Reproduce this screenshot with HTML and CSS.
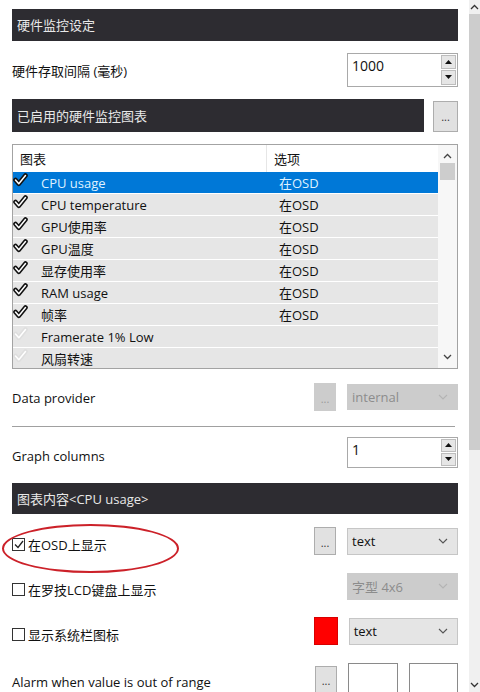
FILE: index.html
```html
<!DOCTYPE html>
<html lang="zh-CN">
<head>
  <meta charset="UTF-8" />
  <meta name="viewport" content="width=device-width, initial-scale=1.0" />
  <title>硬件监控设定</title>
  <link rel="stylesheet" href="styles.css">
</head>
<body>
  <div class="window">
    <div class="panel">
      <div class="title">硬件监控设定</div>

      <div class="row r-interval">
        <span class="label">硬件存取间隔 (毫秒)</span>
        <div class="spin tall">
          <span class="spin-val">1000</span>
          <div class="spin-btns">
            <span class="spin-btn"><svg width="7" height="4" viewBox="0 0 7 4"><path d="M0 4 L3.5 0 L7 4 Z" fill="#111"/></svg></span>
            <span class="spin-btn"><svg width="7" height="4" viewBox="0 0 7 4"><path d="M0 0 L3.5 4 L7 0 Z" fill="#111"/></svg></span>
          </div>
        </div>
      </div>

      <div class="title-row">
        <div class="title grow">已启用的硬件监控图表</div>
        <button class="dots big">...</button>
      </div>

      <div class="list">
        <div class="list-body">
          <div class="list-head">
            <span class="col-name">图表</span>
            <span class="col-opt">选项</span>
          </div>
          <div id="rows"></div>
        </div>
        <div class="list-scroll">
          <svg width="9" height="6" viewBox="0 0 9 6"><path d="M1 5 L4.5 1.5 L8 5" fill="none" stroke="#444" stroke-width="1.3"/></svg>
          <div class="list-thumb"></div>
          <div class="grow"></div>
          <svg width="9" height="6" viewBox="0 0 9 6"><path d="M1 1 L4.5 4.5 L8 1" fill="none" stroke="#444" stroke-width="1.3"/></svg>
        </div>
      </div>

      <div class="row r-provider">
        <span class="label">Data provider</span>
        <div class="ctrls">
          <button class="dots off">...</button>
          <div class="select off">
            <span>internal</span>
            <svg width="10" height="6" viewBox="0 0 10 6"><path d="M1 1 L5 5 L9 1" fill="none" stroke="#b4b4b4" stroke-width="1.1"/></svg>
          </div>
        </div>
      </div>

      <div class="sep"></div>

      <div class="row r-columns">
        <span class="label">Graph columns</span>
        <div class="spin">
          <span class="spin-val">1</span>
          <div class="spin-btns">
            <span class="spin-btn"><svg width="7" height="4" viewBox="0 0 7 4"><path d="M0 4 L3.5 0 L7 4 Z" fill="#111"/></svg></span>
            <span class="spin-btn"><svg width="7" height="4" viewBox="0 0 7 4"><path d="M0 0 L3.5 4 L7 0 Z" fill="#111"/></svg></span>
          </div>
        </div>
      </div>

      <div class="title t-content">图表内容&lt;CPU usage&gt;</div>

      <div class="row opt first">
        <label class="check"><span class="box on"><svg width="10" height="9" viewBox="0 0 10 9"><path d="M1 4.5 L4 7.5 L9 1" fill="none" stroke="#222" stroke-width="1.3"/></svg></span>在OSD上显示</label>
        <div class="ctrls">
          <button class="dots">...</button>
          <div class="select">
            <span>text</span>
            <svg width="10" height="6" viewBox="0 0 10 6"><path d="M1 1 L5 5 L9 1" fill="none" stroke="#555" stroke-width="1.1"/></svg>
          </div>
        </div>
      </div>

      <div class="row opt">
        <label class="check"><span class="box"></span>在罗技LCD键盘上显示</label>
        <div class="ctrls">
          <div class="select off">
            <span>字型 4x6</span>
            <svg width="10" height="6" viewBox="0 0 10 6"><path d="M1 1 L5 5 L9 1" fill="none" stroke="#b4b4b4" stroke-width="1.1"/></svg>
          </div>
        </div>
      </div>

      <div class="row opt">
        <label class="check"><span class="box"></span>显示系统栏图标</label>
        <div class="ctrls">
          <div class="swatch"></div>
          <div class="select">
            <span>text</span>
            <svg width="10" height="6" viewBox="0 0 10 6"><path d="M1 1 L5 5 L9 1" fill="none" stroke="#555" stroke-width="1.1"/></svg>
          </div>
        </div>
      </div>

      <div class="row opt last">
        <span class="label">Alarm when value is out of range</span>
        <div class="ctrls">
          <button class="dots low">...</button>
          <div class="field"></div>
          <div class="field"></div>
        </div>
      </div>

      <div class="mark"></div>
    </div>

    <div class="vscroll">
      <svg width="9" height="6" viewBox="0 0 9 6"><path d="M1 5 L4.5 1.5 L8 5" fill="none" stroke="#333" stroke-width="1.3"/></svg>
      <div class="thumb"></div>
      <div class="grow"></div>
      <svg width="9" height="6" viewBox="0 0 9 6"><path d="M1 1 L4.5 4.5 L8 1" fill="none" stroke="#333" stroke-width="1.3"/></svg>
    </div>
  </div>

  <script>
    const graphs = [
      { name: 'CPU usage', osd: true, on: true, sel: true },
      { name: 'CPU temperature', osd: true, on: true },
      { name: 'GPU使用率', osd: true, on: true },
      { name: 'GPU温度', osd: true, on: true },
      { name: '显存使用率', osd: true, on: true },
      { name: 'RAM usage', osd: true, on: true },
      { name: '帧率', osd: true, on: true },
      { name: 'Framerate 1% Low', osd: false, on: false },
      { name: '风扇转速', osd: false, on: false }
    ];

    const tick = (fill, edge) => `
      <svg width="15" height="14" viewBox="0 0 15 14">
        <path d="M2.5 7 L5.8 10.8 L12.5 2.5" fill="none" stroke="${edge}" stroke-width="4.6" stroke-linecap="round" stroke-linejoin="round"/>
        <path d="M2.5 7 L5.8 10.8 L12.5 2.5" fill="none" stroke="${fill}" stroke-width="1.5" stroke-linecap="round" stroke-linejoin="round"/>
      </svg>`;

    const rows = document.getElementById('rows');
    graphs.forEach(g => {
      const mark = g.on ? tick('#fff', '#111') : tick('#fff', '#dedede');
      rows.innerHTML += `
        <div class="item${g.sel ? ' sel' : ''}">
          <span class="col-check">${mark}</span>
          <span class="col-text">${g.name}</span>
          <span class="col-val">${g.osd ? '在OSD' : ''}</span>
        </div>`;
    });
  </script>
</body>
</html>
```

FILE: styles.css
```css
* { box-sizing: border-box; }
body {
  margin: 0;
  font-family: "Open Sans", "Noto Sans CJK SC", sans-serif;
  font-size: 13px;
  color: #111;
  background: #fff;
}

.window {
  display: flex;
  height: 692px;
  overflow: hidden;
}

.panel {
  flex: 1;
  position: relative;
  display: flex;
  flex-direction: column;
  padding: 9px 11px 0 12px;
}

.grow { flex: 1; }

.title {
  height: 32px;
  background: #2d2c31;
  color: #e8e8e8;
  padding-left: 5px;
  display: flex;
  align-items: center;
}

.row {
  display: flex;
  align-items: center;
  justify-content: space-between;
}

.label { padding-top: 2px; }

.r-interval { margin-top: 12px; height: 34px; }

.title-row {
  margin-top: 12px;
  display: flex;
  align-items: flex-start;
  gap: 9px;
}

.title-row .title { height: 33px; }

/* buttons */
.dots {
  width: 22px;
  height: 28px;
  padding: 0 0 6px;
  font: inherit;
  font-size: 11px;
  line-height: 1;
  color: #333;
  background: #e1e1e1;
  border: 1px solid #adadad;
  display: flex;
  align-items: flex-end;
  justify-content: center;
}

.dots.big { width: 25px; height: 31px; margin-top: 2px; padding-bottom: 9px; }
.dots.off { background: #cccccc; border-color: #cccccc; color: #9a9a9a; }
.dots.low { height: 27px; margin-top: 4px; align-self: flex-start; }

/* spin box */
.spin {
  width: 111px;
  height: 31px;
  border: 1px solid #a9a9a9;
  display: flex;
  justify-content: space-between;
  background: #fff;
}

.spin.tall { height: 34px; }

.spin-val { padding: 2px 0 0 4px; font-size: 14px; }

.spin-btns {
  width: 16px;
  display: flex;
  flex-direction: column;
  gap: 1px;
  padding: 1px 1px 1px 0;
}

.spin-btn {
  flex: 1;
  background: #e6e6e6;
  border: 1px solid #bdbdbd;
  display: flex;
  align-items: center;
  justify-content: center;
}

/* list */
.list {
  margin-top: 12px;
  height: 227px;
  border: 1px solid #a3a3a3;
  display: flex;
  overflow: hidden;
}

.list-body { flex: 1; }

.list-head {
  height: 27px;
  display: flex;
  align-items: stretch;
}

.col-name {
  width: 254px;
  padding: 4px 0 0 7px;
  border-right: 1px solid #e6e6e6;
}

.col-opt { padding: 4px 0 0 7px; }

.item {
  height: 21px;
  margin-bottom: 1px;
  background: #e6e6e6;
  display: flex;
  align-items: center;
  font-size: 13px;
  padding-top: 1px;
}

.item.sel { background: #0078d7; color: #dff1ff; }

.col-check {
  width: 28px;
  display: flex;
  align-items: center;
  margin-top: -5px;
}

.col-text { width: 238px; }

.list-scroll {
  width: 19px;
  background: #f7f7f7;
  display: flex;
  flex-direction: column;
  align-items: center;
  padding: 8px 0 8px;
}

.list-thumb {
  width: 15px;
  height: 17px;
  margin-top: 4px;
  background: #cdcdcd;
}

/* selects */
.ctrls {
  display: flex;
  align-items: center;
  justify-content: flex-end;
  gap: 11px;
  width: 144px;
}

.select {
  width: 111px;
  height: 27px;
  background: #e5e5e5;
  border: 1px solid #c6c6c6;
  display: flex;
  align-items: center;
  justify-content: space-between;
  padding: 0 9px 0 4px;
}

.select.off { background: #cccccc; border-color: #cccccc; color: #8c8c8c; }

.r-provider { margin-top: 14px; height: 28px; }
.r-provider .select { height: 26px; }

.sep {
  margin-top: 15px;
  margin-right: 3px;
  height: 1px;
  background: #a0a0a0;
}

.r-columns { margin-top: 10px; height: 31px; }
.r-columns .label { padding-top: 8px; }

.t-content { margin-top: 15px; }

/* option rows */
.opt { margin-top: 17px; height: 28px; }
.opt.first { margin-top: 13px; }
.opt .label, .check { padding-top: 6px; }

.check {
  display: flex;
  align-items: center;
  gap: 3px;
}

.box {
  width: 13px;
  height: 13px;
  border: 1px solid #333;
  display: flex;
  align-items: center;
  justify-content: center;
}

.swatch {
  width: 24px;
  height: 28px;
  background: #ff0000;
  border: 1px solid #d80000;
}

.opt.last { align-items: flex-start; height: 30px; }
.opt.last .label { padding-top: 11px; }

.field {
  width: 50px;
  height: 30px;
  border: 1px solid #8a8a8a;
  margin-top: 1px;
}

.field + .field { width: 49px; }

/* red marker drawn over the first option */
.mark {
  position: absolute;
  left: 2px;
  top: 524px;
  width: 177px;
  height: 49px;
  border: 2px solid #cc2129;
  border-radius: 50%;
}

/* window scrollbar */
.vscroll {
  width: 11px;
  background: #f0f0f0;
  display: flex;
  flex-direction: column;
  align-items: center;
  padding: 4px 0 4px;
}

.thumb {
  width: 11px;
  height: 436px;
  margin-top: 4px;
  background: #cdcdcd;
}
```
